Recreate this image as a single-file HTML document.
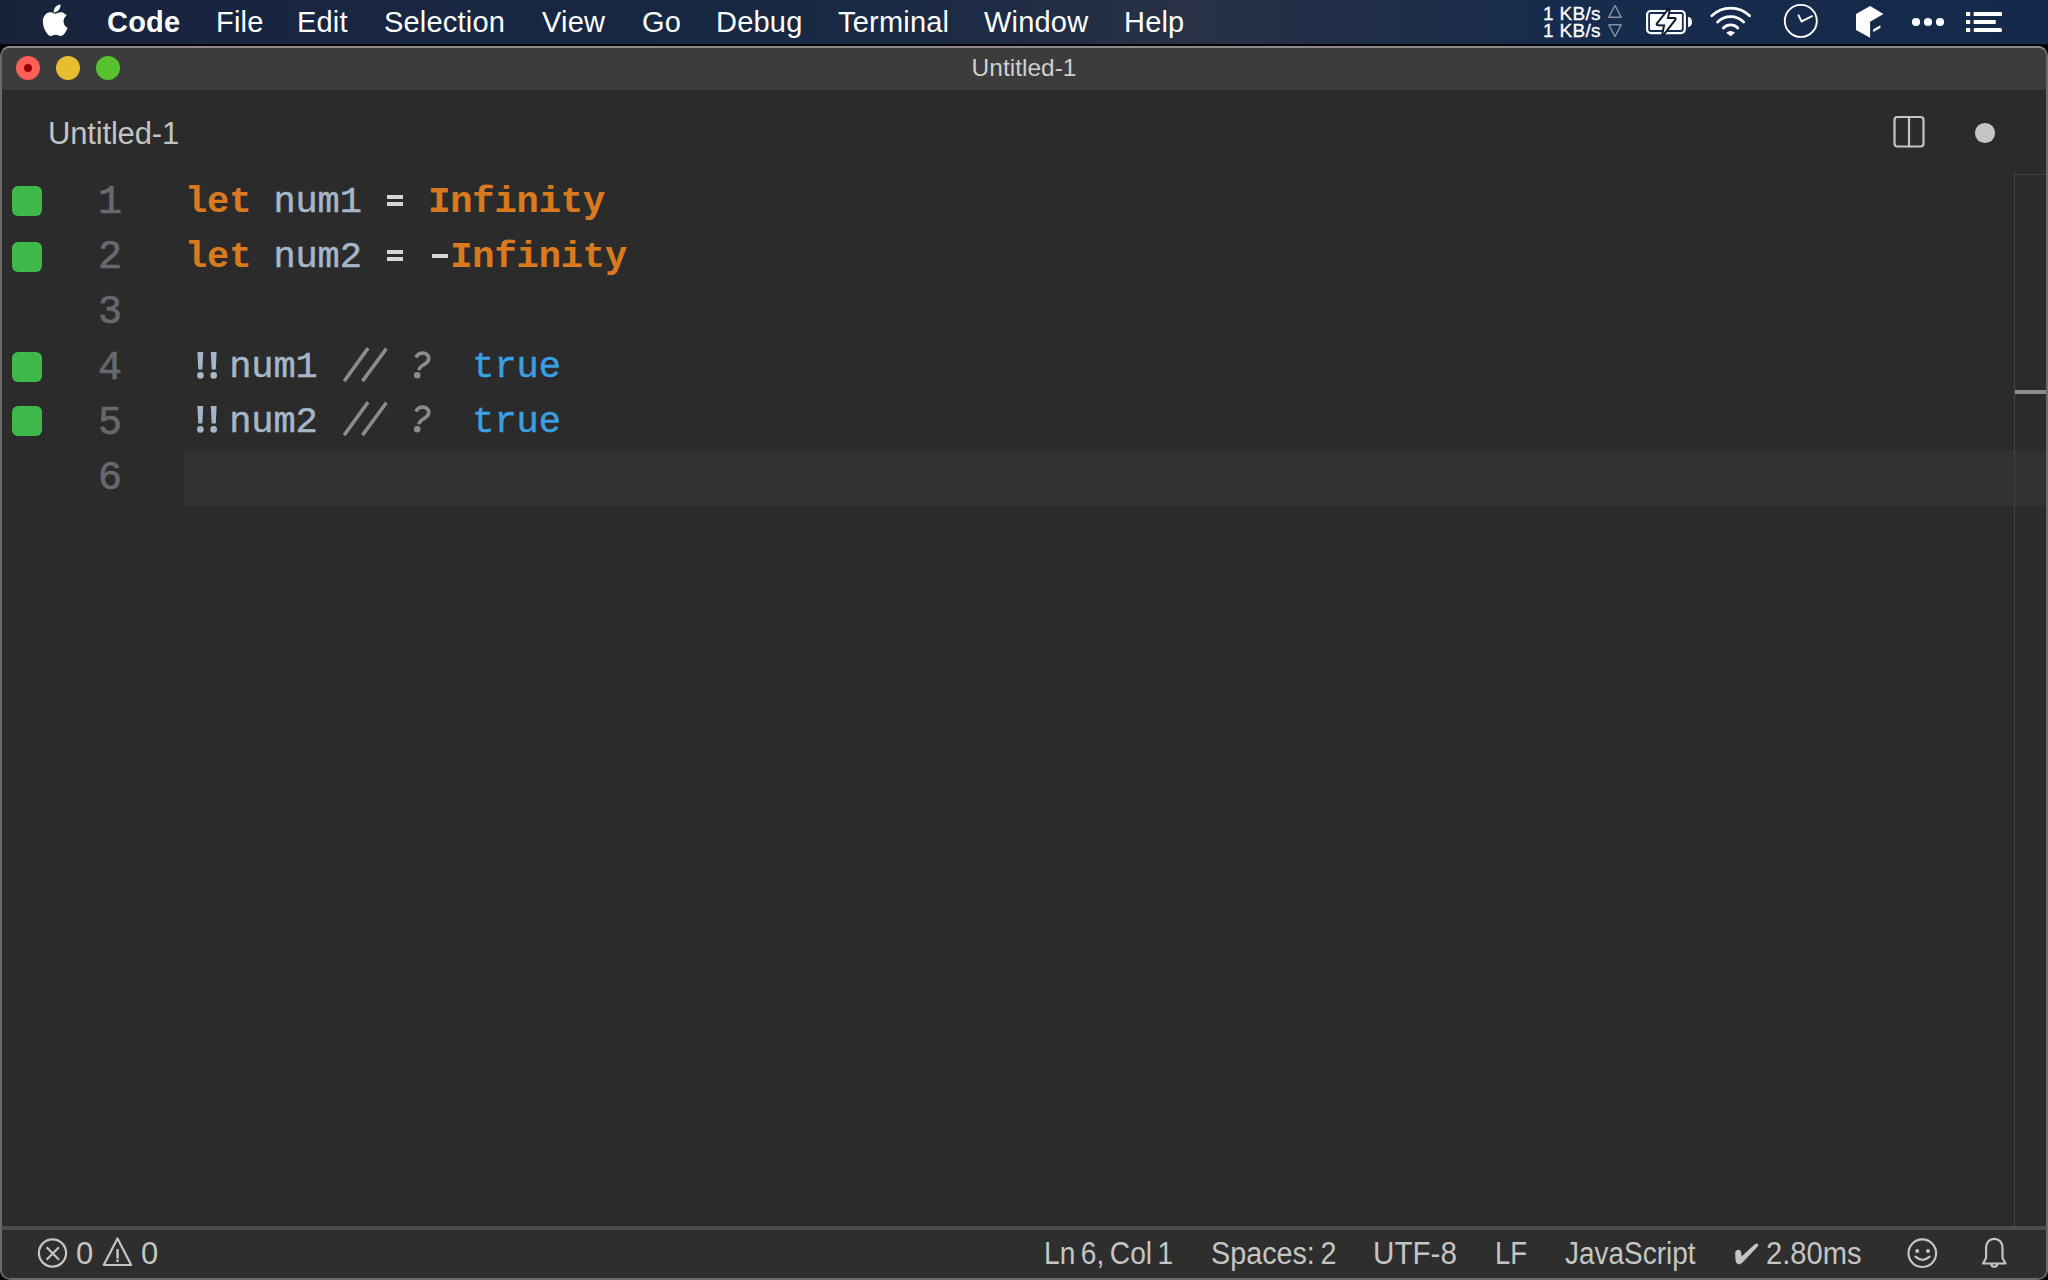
<!DOCTYPE html>
<html><head><meta charset="utf-8">
<style>
*{margin:0;padding:0;box-sizing:border-box}
html,body{width:2048px;height:1280px;overflow:hidden;background:#000}
body{position:relative;font-family:"Liberation Sans",sans-serif}
.a{position:absolute;white-space:nowrap}
#menubar{position:absolute;left:0;top:0;width:2048px;height:44px;
 background:linear-gradient(90deg,#18233b 0%,#182540 12%,#172843 35%,#1d2b44 48%,#293246 58%,#1f2d47 66%,#172b4c 76%,#15294b 100%);}
.mi{position:absolute;top:0;height:44px;line-height:44px;color:#fff;font-size:29px;white-space:nowrap;letter-spacing:0.2px}
#win{position:absolute;left:0;top:46px;width:2048px;height:1234px;background:#6a6a6a;border-radius:10px 10px 10px 10px;overflow:hidden}
#wintop{position:absolute;left:0;top:0;width:2048px;height:4px;background:#8a8a8a}
#inner{position:absolute;left:2px;top:2px;right:2px;bottom:2px;background:#2b2b2b;border-radius:8px;overflow:hidden}
#titlebar{position:absolute;left:0;top:0;right:0;height:42px;background:#3c3c3c}
.tl{position:absolute;width:24px;height:24px;border-radius:50%}
.ln{position:absolute;left:60px;width:62px;text-align:right;color:#65696e;font-family:"Liberation Mono",monospace;font-size:40px;-webkit-text-stroke:0.7px currentColor;height:55px;line-height:55px}
.gm{position:absolute;left:12px;width:30px;height:30px;border-radius:6px;background:#3db849}
.code{position:absolute;left:185px;font-family:"Liberation Mono",monospace;font-size:37px;letter-spacing:-0.1px;height:55px;line-height:55px;white-space:pre;color:#a6b6c9}
.kw{color:#d97a1e;font-weight:bold}
.bg1{position:relative;left:3px}.bg2{position:relative;left:-3px}
.code{-webkit-text-stroke:0.5px currentColor}.kw{-webkit-text-stroke:0.2px currentColor}
.op{color:#d8d8d8}
.cm{color:#7f7f7f;font-style:italic}
.tr{color:#3b9fe2}
.st{position:absolute;top:1230px;height:48px;line-height:48px;color:#c5c5c5;font-size:31px;white-space:nowrap}
</style></head>
<body>
<div id="menubar">
 <svg class="a" style="left:42px;top:4px" width="27" height="33.4" viewBox="0 0 30 36" preserveAspectRatio="none">
  <path fill="#fff" d="M20.6 0.5c0.2 2.3-0.7 4.5-2 6.1-1.4 1.6-3.5 2.8-5.6 2.6-0.3-2.2 0.8-4.5 2-5.9 1.4-1.6 3.7-2.7 5.6-2.8zM27.6 12.4c-0.2 0.1-3.7 2.2-3.6 6.4 0 5 4.4 6.7 4.4 6.7-0.1 0.1-0.7 2.4-2.3 4.8-1.4 2.1-2.9 4.1-5.2 4.2-2.3 0-3-1.4-5.6-1.4-2.6 0-3.400 1.3-5.500 1.400-2.200 0.100-3.900-2.200-5.300-4.300-2.900-4.200-5.100-11.900-2.100-17.100 1.500-2.600 4.100-4.200 6.900-4.200 2.200 0 4.200 1.500 5.500 1.500 1.300 0 3.600-1.800 6.200-1.600 1.000 0 4.000 0.400 6.000 3.300z"/>
 </svg>
 <div class="mi" style="left:107px;font-weight:bold">Code</div>
 <div class="mi" style="left:216px">File</div>
 <div class="mi" style="left:297px">Edit</div>
 <div class="mi" style="left:384px">Selection</div>
 <div class="mi" style="left:542px">View</div>
 <div class="mi" style="left:642px">Go</div>
 <div class="mi" style="left:716px">Debug</div>
 <div class="mi" style="left:838px">Terminal</div>
 <div class="mi" style="left:984px">Window</div>
 <div class="mi" style="left:1124px">Help</div>
 <div class="a" style="left:1543px;top:5px;font-size:19px;line-height:17.4px;color:#fff;letter-spacing:0.3px;-webkit-text-stroke:0.3px #fff">1 KB/s<br>1 KB/s</div>
 <svg class="a" style="left:1530px;top:0" width="518" height="44" viewBox="1530 0 518 44">
  <path d="M1615 5.5L1608.8 17.2H1621.2Z M1615 36.5L1608.8 24.8H1621.2Z" fill="none" stroke="#8a93a2" stroke-width="1.4" stroke-linejoin="round"/>
  <rect x="1647.1" y="11" width="37.7" height="22.1" rx="3.8" fill="none" stroke="#fff" stroke-width="2.2"/>
  <rect x="1650" y="14" width="31.9" height="15.9" rx="0.8" fill="#fff"/>
  <path d="M1688 16.9h0.4a3.6 5.1 0 0 1 0 10.2h-0.4z" fill="#fff"/>
  <path d="M1668.6 10.2L1666.8 18.9L1674.7 19.1L1663.4 33.6L1665.3 24.5L1657.6 24.2Z" fill="#fff" stroke="#0b1b35" stroke-width="4" stroke-linejoin="round" paint-order="stroke"/>
  <path d="M1711.8 15.8A27 27 0 0 1 1749.6 15.8" fill="none" stroke="#fff" stroke-width="2.8" stroke-linecap="round"/>
  <path d="M1717.6 22A18.5 18.5 0 0 1 1743.6 22" fill="none" stroke="#fff" stroke-width="2.8" stroke-linecap="round"/>
  <path d="M1723.4 28A10 10 0 0 1 1737.8 28" fill="none" stroke="#fff" stroke-width="2.8" stroke-linecap="round"/>
  <path d="M1726.2 32.8L1730.6 36.2L1735 32.8A6.5 6.5 0 0 0 1726.2 32.8Z" fill="#fff"/>
  <circle cx="1800.8" cy="20.9" r="16" fill="none" stroke="#fff" stroke-width="1.9"/>
  <path d="M1798.2 14.6L1801.6 21.4L1812.6 15.8" fill="none" stroke="#fff" stroke-width="1.9"/>
  <path d="M1856 14L1870.1 5.9L1883.5 14L1870.1 21.7V37.8L1856 29.9Z" fill="#fff"/>
  <path d="M1873.2 29.2L1880.4 25.3V28.1L1873.2 32Z" fill="#fff"/>
  <circle cx="1916" cy="22" r="4.1" fill="#fff"/>
  <circle cx="1928" cy="22" r="4.1" fill="#fff"/>
  <circle cx="1940" cy="22" r="4.1" fill="#fff"/>
  <rect x="1966" y="12" width="4.2" height="4" fill="#fff"/>
  <rect x="1966" y="20" width="4.2" height="4" fill="#fff"/>
  <rect x="1966" y="28" width="4.2" height="4" fill="#fff"/>
  <rect x="1973.6" y="12" width="28.4" height="4" rx="0.8" fill="#fff"/>
  <rect x="1973.6" y="20" width="22.2" height="4" rx="0.8" fill="#fff"/>
  <rect x="1973.6" y="28" width="28.4" height="4" rx="1.5" fill="#fff"/>
 </svg>
</div>
<div class="a" style="left:0;top:44px;width:2048px;height:2px;background:#000"></div>
<div id="win"><div id="wintop"></div>
 <div id="inner">
  <div id="titlebar"></div>
 </div>
</div>
<!-- traffic lights -->
<div class="tl" style="left:16px;top:56px;background:#fe5f57"></div>
<div class="a" style="left:24px;top:64px;width:8px;height:8px;border-radius:50%;background:#9a0000"></div>
<div class="tl" style="left:56px;top:56px;background:#e6be2f"></div>
<div class="tl" style="left:96px;top:56px;background:#56c22d"></div>
<div class="a" style="left:0;width:2048px;top:47px;height:42px;line-height:42px;text-align:center;color:#cfcfcf;font-size:24.5px">Untitled-1</div>

<!-- tab -->
<div class="a" style="left:48px;top:113px;height:42px;line-height:42px;color:#c3c3c3;font-size:31px;letter-spacing:-0.17px">Untitled-1</div>
<svg class="a" style="left:1892px;top:115px" width="34" height="34" viewBox="0 0 34 34">
 <rect x="2.5" y="2" width="29" height="29.5" rx="3" fill="none" stroke="#c5c5c5" stroke-width="2.2"/>
 <line x1="17" y1="2" x2="17" y2="31.5" stroke="#c5c5c5" stroke-width="2.2"/>
</svg>
<div class="a" style="left:1975px;top:123px;width:19.5px;height:19.5px;border-radius:50%;background:#c5c5c5"></div>

<!-- current line -->
<div class="a" style="left:184px;top:450px;width:1862px;height:56px;background:#323232"></div>
<!-- overview ruler -->
<div class="a" style="left:2014px;top:174px;width:1px;height:1052px;background:#434343"></div>
<div class="a" style="left:2014px;top:174px;width:32px;height:1px;background:#434343"></div>
<div class="a" style="left:2015px;top:390px;width:31px;height:4px;background:#8c8c8c"></div>

<!-- gutter -->
<div class="gm" style="top:186px"></div>
<div class="gm" style="top:241.5px"></div>
<div class="gm" style="top:351.5px"></div>
<div class="gm" style="top:406px"></div>
<div class="ln" style="top:175px">1</div>
<div class="ln" style="top:230px">2</div>
<div class="ln" style="top:285px">3</div>
<div class="ln" style="top:341px">4</div>
<div class="ln" style="top:396px">5</div>
<div class="ln" style="top:451px">6</div>

<div class="code" style="top:175px"><span class="kw">let</span> num1   <span class="kw">Infinity</span></div>
<div class="code" style="top:230px"><span class="kw">let</span> num2    <span class="kw">Infinity</span></div>
<div class="code" style="top:340px">  num1       <span class="tr">true</span></div>
<div class="code" style="top:395px">  num2       <span class="tr">true</span></div>

<svg class="a" style="left:330px;top:340px" width="110" height="50" viewBox="0 0 110 50">
 <path d="M38.1 8.1L14.2 41.1M56.4 8.6L32.5 41.1" stroke="#8b8b8b" stroke-width="3.5"/>
 <path d="M85.9 17.6C87.3 14.5 89.8 13.1 92.6 13.1C96.4 13.1 98.7 15.5 98.7 18.5C98.7 21.4 96.8 22.9 94.3 24.4C91.3 26.2 89.1 27.3 89.1 30.2" fill="none" stroke="#8b8b8b" stroke-width="3.6"/>
 <circle cx="87.2" cy="35.3" r="3.3" fill="#8b8b8b"/>
</svg>
<svg class="a" style="left:330px;top:394px" width="110" height="50" viewBox="0 0 110 50">
 <path d="M38.1 8.1L14.2 41.1M56.4 8.6L32.5 41.1" stroke="#8b8b8b" stroke-width="3.5"/>
 <path d="M85.9 17.6C87.3 14.5 89.8 13.1 92.6 13.1C96.4 13.1 98.7 15.5 98.7 18.5C98.7 21.4 96.8 22.9 94.3 24.4C91.3 26.2 89.1 27.3 89.1 30.2" fill="none" stroke="#8b8b8b" stroke-width="3.6"/>
 <circle cx="87.2" cy="35.3" r="3.3" fill="#8b8b8b"/>
</svg>
<div class="a" style="left:387px;top:194.8px;width:16.2px;height:4.1px;background:#d6d6d6"></div>
<div class="a" style="left:387px;top:202px;width:16.2px;height:4.1px;background:#d6d6d6"></div>
<div class="a" style="left:387px;top:250px;width:16.2px;height:4.1px;background:#d6d6d6"></div>
<div class="a" style="left:387px;top:257.2px;width:16.2px;height:4.1px;background:#d6d6d6"></div>
<div class="a" style="left:431.6px;top:253.9px;width:16.3px;height:4.1px;background:#d6d6d6"></div>
<svg class="a" style="left:190px;top:348px" width="32" height="32" viewBox="190 348 32 32">
 <path d="M197.4 352H203.2L202.4 369.4H198.3Z M210.8 352H216.6L215.8 369.4H211.7Z" fill="#a6b6c9"/>
 <circle cx="200.4" cy="375.4" r="3.3" fill="#a6b6c9"/><circle cx="213.7" cy="375.4" r="3.3" fill="#a6b6c9"/>
</svg>
<svg class="a" style="left:190px;top:402px" width="32" height="32" viewBox="190 348 32 32">
 <path d="M197.4 352H203.2L202.4 369.4H198.3Z M210.8 352H216.6L215.8 369.4H211.7Z" fill="#a6b6c9"/>
 <circle cx="200.4" cy="375.4" r="3.3" fill="#a6b6c9"/><circle cx="213.7" cy="375.4" r="3.3" fill="#a6b6c9"/>
</svg>
<!-- status bar -->
<div class="a" style="left:2px;top:1226px;width:2044px;height:4px;background:#4d4d4d"></div>
<div class="a" style="left:2px;top:1230px;width:2044px;height:48px;background:#2e2e2e;border-radius:0 0 8px 8px"></div>
<svg class="a" style="left:36px;top:1236px" width="34" height="34" viewBox="0 0 34 34">
 <circle cx="16.5" cy="17" r="13.6" fill="none" stroke="#c5c5c5" stroke-width="2.2"/>
 <path d="M10.6 11.2L23 23.8M23 11.2L10.6 23.8" stroke="#c5c5c5" stroke-width="2.2"/>
</svg>
<div class="st" style="left:76px">0</div>
<svg class="a" style="left:100px;top:1235px" width="36" height="34" viewBox="0 0 36 34">
 <path d="M17.5 3.5L3.8 30h27.4z" fill="none" stroke="#c5c5c5" stroke-width="2.2" stroke-linejoin="round"/>
 <rect x="16.3" y="14" width="2.5" height="9.5" fill="#c5c5c5"/>
 <rect x="16.3" y="24.5" width="2.5" height="2.5" fill="#c5c5c5"/>
</svg>
<div class="st" style="left:141px">0</div>
<div class="st" style="left:1044px;word-spacing:-2.5px;transform:scaleX(0.9075);transform-origin:0 0">Ln 6, Col 1</div>
<div class="st" style="left:1211px;word-spacing:-2.5px;transform:scaleX(0.927);transform-origin:0 0">Spaces: 2</div>
<div class="st" style="left:1373px;transform:scaleX(0.956);transform-origin:0 0">UTF-8</div>
<div class="st" style="left:1495px;transform:scaleX(0.888);transform-origin:0 0">LF</div>
<div class="st" style="left:1565px;transform:scaleX(0.902);transform-origin:0 0">JavaScript</div>
<svg class="a" style="left:1734px;top:1242px" width="26" height="24" viewBox="0 0 26 24">
 <path fill="#c5c5c5" d="M1.2 11.5C1.2 8.5 3 7.7 4.6 7.7C6.3 7.7 7 9 7.1 10.5L7.8 14.2L20.5 2.6C21.8 1.4 23.5 1.1 24.2 2.2C24.6 3 24.2 4 23 5.3L8.5 20.5C7 22 5.5 22.5 4.3 22.2C2.3 21.6 1.6 19.5 1.4 17Z"/>
</svg>
<div class="st" style="left:1766px;transform:scaleX(0.94);transform-origin:0 0">2.80ms</div>
<svg class="a" style="left:1904px;top:1235px" width="36" height="36" viewBox="0 0 36 36">
 <circle cx="18.3" cy="18.2" r="13.8" fill="none" stroke="#c5c5c5" stroke-width="2.2"/>
 <circle cx="13.2" cy="16" r="2" fill="#c5c5c5"/>
 <circle cx="24" cy="16" r="2" fill="#c5c5c5"/>
 <path d="M11.5 21.6Q18.3 28 25.6 21.6" fill="none" stroke="#c5c5c5" stroke-width="2.2" stroke-linecap="round"/>
</svg>
<svg class="a" style="left:1978px;top:1235px" width="34" height="36" viewBox="0 0 34 36">
 <path d="M5 28.5h22.5l-3-5.5v-10c0-5.5-3.5-9.2-8.2-9.2s-8.2 3.7-8.2 9.2v10z" fill="none" stroke="#c5c5c5" stroke-width="2.2" stroke-linejoin="round"/>
 <path d="M13.3 28.8a3 3 0 0 0 6 0" fill="none" stroke="#c5c5c5" stroke-width="2.2"/>
</svg>
</body></html>
